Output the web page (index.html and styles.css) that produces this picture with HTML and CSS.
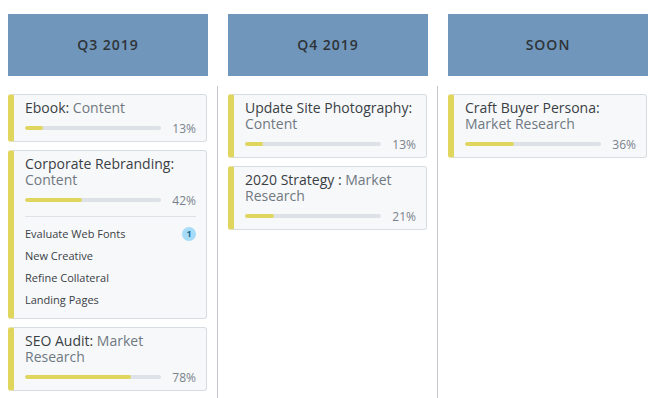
FILE: index.html
```html
<!DOCTYPE html>
<html lang="en">
<head>
    <meta charset="UTF-8">
    <meta name="viewport" content="width=device-width, initial-scale=1.0">
    <title>Roadmap</title>
    <link rel="stylesheet" href="styles.css">
</head>
<body>
    <div class="board">
        <!-- Q3 2019 -->
        <div class="column">
            <div class="column-header">Q3 2019</div>
            <div class="column-body">
                <div class="card">
                    <div class="card-title">Ebook: <span class="category">Content</span></div>
                    <div class="progress">
                        <div class="bar"><div class="fill" style="width: 13%"></div></div>
                        <span class="percent">13%</span>
                    </div>
                </div>
                <div class="card">
                    <div class="card-title">Corporate Rebranding: <span class="category">Content</span></div>
                    <div class="progress">
                        <div class="bar"><div class="fill" style="width: 42%"></div></div>
                        <span class="percent">42%</span>
                    </div>
                    <ul class="tasks">
                        <li>Evaluate Web Fonts <span class="badge">1</span></li>
                        <li>New Creative</li>
                        <li>Refine Collateral</li>
                        <li>Landing Pages</li>
                    </ul>
                </div>
                <div class="card">
                    <div class="card-title">SEO Audit: <span class="category">Market Research</span></div>
                    <div class="progress">
                        <div class="bar"><div class="fill" style="width: 78%"></div></div>
                        <span class="percent">78%</span>
                    </div>
                </div>
            </div>
        </div>

        <!-- Q4 2019 -->
        <div class="column">
            <div class="column-header">Q4 2019</div>
            <div class="column-body">
                <div class="card">
                    <div class="card-title">Update Site Photography: <span class="category">Content</span></div>
                    <div class="progress">
                        <div class="bar"><div class="fill" style="width: 13%"></div></div>
                        <span class="percent">13%</span>
                    </div>
                </div>
                <div class="card">
                    <div class="card-title">2020 Strategy : <span class="category">Market Research</span></div>
                    <div class="progress">
                        <div class="bar"><div class="fill" style="width: 21%"></div></div>
                        <span class="percent">21%</span>
                    </div>
                </div>
            </div>
        </div>

        <!-- Soon -->
        <div class="column">
            <div class="column-header">SOON</div>
            <div class="column-body">
                <div class="card">
                    <div class="card-title">Craft Buyer Persona: <span class="category">Market Research</span></div>
                    <div class="progress">
                        <div class="bar"><div class="fill" style="width: 36%"></div></div>
                        <span class="percent">36%</span>
                    </div>
                </div>
            </div>
        </div>
    </div>
</body>
</html>
```

FILE: styles.css
```css
body {
    font-family: "Open Sans", Arial, sans-serif;
    margin: 0;
    padding: 14px 8px 0;
    height: 100vh;
    box-sizing: border-box;
    overflow: hidden;
    background-color: #fff;
}
.board {
    display: flex;
    gap: 20px;
    height: 100%;
}
.column {
    width: 200px;
    flex-shrink: 0;
    display: flex;
    flex-direction: column;
}
.column-header {
    height: 62px;
    line-height: 62px;
    text-align: center;
    background-color: #7096bb;
    color: #2e3338;
    font-size: 14px;
    font-weight: 600;
    letter-spacing: 1px;
}
.column-body {
    flex: 1;
    margin-top: 10px;
    padding-top: 8px;
}
.column + .column .column-body {
    margin-left: -11px;
    padding-left: 10px;
    border-left: 1px solid #c3c7cb;
}
.card {
    width: 199px;
    box-sizing: border-box;
    margin-bottom: 8px;
    padding: 5px 10px 5px 11px;
    background-color: #f7f8fa;
    border: 1px solid #d6dce1;
    border-left: 6px solid #e0d65e;
    border-radius: 3px;
}
.card-title {
    font-size: 14px;
    line-height: 16px;
    color: #3a3f45;
}
.category {
    color: #6f7881;
}
.progress {
    display: flex;
    align-items: center;
    margin-top: 4px;
    height: 16px;
}
.bar {
    flex: 1;
    height: 4px;
    border-radius: 2px;
    background-color: #dce2e7;
    overflow: hidden;
}
.fill {
    height: 100%;
    background-color: #e0d65e;
    border-radius: 2px;
}
.percent {
    width: 35px;
    text-align: right;
    font-size: 12px;
    color: #7a838c;
}
.tasks {
    list-style: none;
    margin: 8px 0 0;
    padding: 6px 0 2px;
    border-top: 1px solid #dde2e6;
}
.tasks li {
    display: flex;
    justify-content: space-between;
    align-items: center;
    font-size: 11px;
    line-height: 22px;
    color: #3a3f45;
}
.badge {
    width: 14px;
    height: 14px;
    line-height: 14px;
    border-radius: 50%;
    text-align: center;
    background-color: #a6dcf8;
    color: #1b6a90;
    font-size: 9px;
    font-weight: 700;
}
```
